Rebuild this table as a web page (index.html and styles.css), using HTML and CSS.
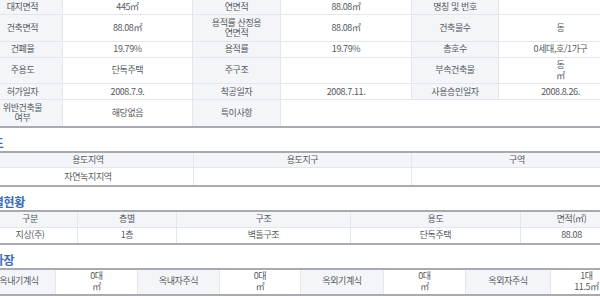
FILE: index.html
```html
<!DOCTYPE html>
<html lang="ko">
<head>
<meta charset="utf-8">
<title>건축물대장</title>
<link rel="stylesheet" href="styles.css">
</head>
<body>
<div class="page">
  <table class="grid t-main">
    <colgroup><col class="w80"><col class="w130"><col class="w88"><col class="w131"><col class="w87"><col class="w124"></colgroup>
    <tr><th>대지면적</th><td>445㎡</td><th>연면적</th><td>88.08㎡</td><th>명칭 및 번호</th><td></td></tr>
    <tr><th>건축면적</th><td>88.08㎡</td><th>용적률 산정용<br>연면적</th><td>88.08㎡</td><th>건축물수</th><td>동</td></tr>
    <tr><th>건폐율</th><td>19.79%</td><th>용적률</th><td>19.79%</td><th>총호수</th><td>0세대,호/1가구</td></tr>
    <tr><th>주용도</th><td>단독주택</td><th>주구조</th><td></td><th>부속건축물</th><td>동<br>㎡</td></tr>
    <tr><th>허가일자</th><td>2008.7.9.</td><th>착공일자</th><td>2008.7.11.</td><th>사용승인일자</th><td>2008.8.26.</td></tr>
    <tr><th>위반건축물<br>여부</th><td>해당없음</td><th>특이사항</th><td colspan="3"></td></tr>
  </table>

  <h2 class="sec-title">용도</h2>
  <table class="grid t-zone">
    <colgroup><col class="w211"><col class="w218"><col class="w211"></colgroup>
    <tr class="head"><th>용도지역</th><th>용도지구</th><th>구역</th></tr>
    <tr class="zone-row"><td>자연녹지지역</td><td></td><td></td></tr>
  </table>

  <h2 class="sec-title">층별현황</h2>
  <table class="grid t-floor">
    <colgroup><col class="w95"><col class="w99"><col class="w174"><col class="w170"><col class="w102"></colgroup>
    <tr class="head"><th>구분</th><th>층별</th><th>구조</th><th>용도</th><th>면적(㎡)</th></tr>
    <tr><td>지상(주)</td><td>1층</td><td>벽돌구조</td><td>단독주택</td><td>88.08</td></tr>
  </table>

  <h2 class="sec-title">주차장</h2>
  <table class="grid t-park">
    <colgroup><col class="w73"><col class="w82"><col class="w82"><col class="w81"><col class="w83"><col class="w82"><col class="w85"><col class="w72"></colgroup>
    <tr><th>옥내기계식</th><td>0대<br>㎡</td><th>옥내자주식</th><td>0대<br>㎡</td><th>옥외기계식</th><td>0대<br>㎡</td><th>옥외자주식</th><td>1대<br>11.5㎡</td></tr>
  </table>
</div>
</body>
</html>
```

FILE: styles.css
```css
html, body {
  margin: 0;
  padding: 0;
  background: #ffffff;
  overflow: hidden;
}

.page {
  width: 640px;
  margin-left: -18px;
  margin-top: -3px;
  font-family: "Noto Sans CJK KR", "Noto Sans", sans-serif;
  color: #555a60;
}

.grid {
  width: 640px;
  border-collapse: collapse;
  table-layout: fixed;
  border-top: 2px solid #a7abb0;
  border-bottom: 2px solid #a7abb0;
}

.grid th,
.grid td {
  font-size: 9px;
  line-height: 10.5px;
  font-weight: normal;
  letter-spacing: -0.4px;
  text-align: center;
  vertical-align: middle;
  padding: 2.5px 3px 2px;
  border: 1px solid #e3e6ea;
  border-top: none;
  white-space: nowrap;
}

.grid tr:last-child th,
.grid tr:last-child td {
  border-bottom: none;
}

.grid th {
  background: #f3f5f8;
}

.grid td {
  background: #ffffff;
}

.grid .head th {
  padding: 2px 3px 2px;
}

.t-zone .zone-row td {
  padding: 3.5px 3px 3px;
}

.t-park th,
.t-park td {
  padding: 1.5px 3px 1.5px;
}

.sec-title {
  margin: 7px 0 0;
  font-size: 12px;
  line-height: 16px;
  font-weight: bold;
  color: #3a6cb3;
  letter-spacing: -0.3px;
}

.w72 { width: 72px; }
.w73 { width: 73px; }
.w80 { width: 80px; }
.w81 { width: 81px; }
.w82 { width: 82px; }
.w83 { width: 83px; }
.w85 { width: 85px; }
.w87 { width: 87px; }
.w88 { width: 88px; }
.w95 { width: 95px; }
.w99 { width: 99px; }
.w102 { width: 102px; }
.w124 { width: 124px; }
.w130 { width: 130px; }
.w131 { width: 131px; }
.w170 { width: 170px; }
.w174 { width: 174px; }
.w211 { width: 211px; }
.w218 { width: 218px; }
```
